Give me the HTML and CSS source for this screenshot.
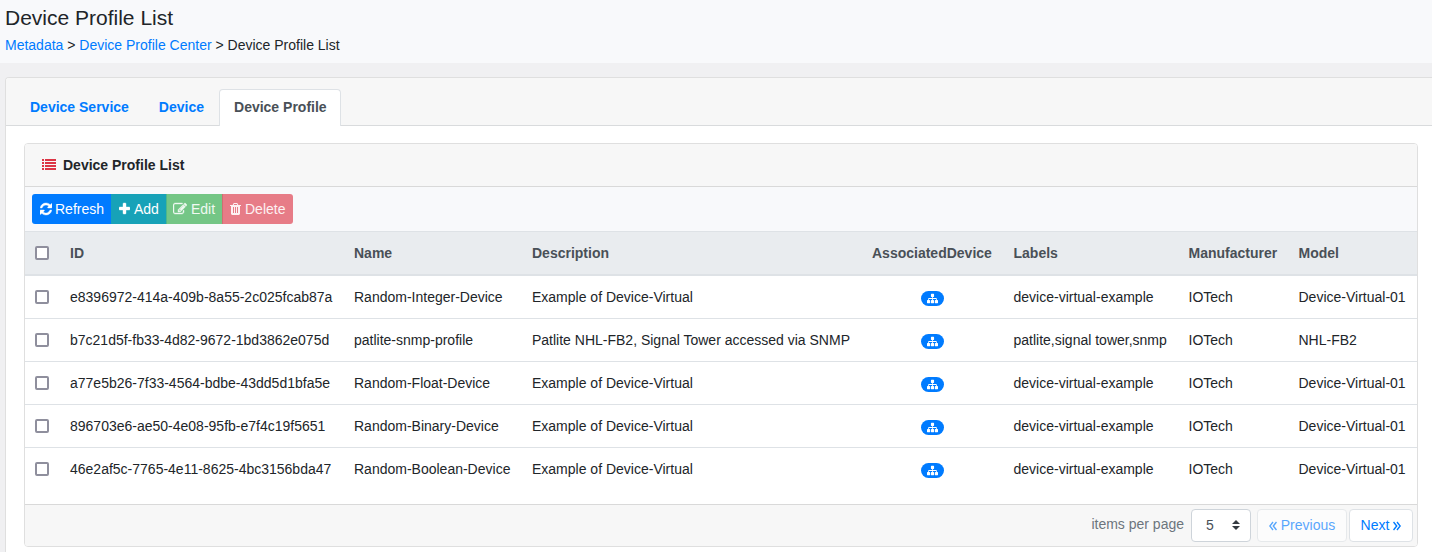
FILE: index.html
```html
<!DOCTYPE html>
<html lang="en">
<head>
<meta charset="utf-8">
<title>Device Profile List</title>
<link rel="stylesheet" href="styles.css">
</head>
<body>
<svg class="sprite" aria-hidden="true">
  <symbol id="list" viewBox="0 0 14 12"><path d="M0 0h2v2H0zM3 0h11v2H3zM0 3h2v2H0zM3 3h11v2H3zM0 6h2v2H0zM3 6h11v2H3zM0 9h2v2H0zM3 9h11v2H3z"/></symbol>
  <symbol id="refresh" viewBox="128 0 1536 1792"><path d="M1639 1056q0 5-1 7-64 268-268 434.500t-478 166.500q-146 0-282.500-55t-243.500-157l-129 129q-19 19-45 19t-45-19-19-45v-448q0-26 19-45t45-19h448q26 0 45 19t19 45-19 45l-137 137q71 66 161 102t187 36q134 0 250-65t186-179q11-17 53-117 8-23 30-23h192q13 0 22.500 9.500t9.500 22.500zm25-800v448q0 26-19 45t-45 19h-448q-26 0-45-19t-19-45 19-45l138-138q-148-137-349-137-134 0-250 65t-186 179q-11 17-53 117-8 23-30 23h-199q-13 0-22.500-9.500t-9.500-22.500v-7q65-268 270-434.500t480-166.500q146 0 284 55.500t245 156.500l130-129q19-19 45-19t45 19 19 45z"/></symbol>
  <symbol id="plus" viewBox="192 0 1408 1792"><path d="M1600 736v192q0 40-28 68t-68 28h-416v416q0 40-28 68t-68 28h-192q-40 0-68-28t-28-68v-416h-416q-40 0-68-28t-28-68v-192q0-40 28-68t68-28h416v-416q0-40 28-68t68-28h192q40 0 68 28t28 68v416h416q40 0 68 28t28 68z"/></symbol>
  <symbol id="edit" viewBox="0 0 1792 1792"><path d="M888 1184l116-116-152-152-116 116v56h96v96h56zm440-720q-16-16-33 1l-350 350q-17 17-1 33t33-1l350-350q17-17 1-33zm80 594v190q0 119-84.500 203.500t-203.500 84.500h-832q-119 0-203.500-84.500t-84.500-203.500v-832q0-119 84.500-203.500t203.500-84.500h832q63 0 117 25 15 7 18 23 3 17-9 29l-49 49q-14 14-32 8-23-6-45-6h-832q-66 0-113 47t-47 113v832q0 66 47 113t113 47h832q66 0 113-47t47-113v-126q0-13 9-22l64-64q15-15 35-7t20 29zm-96-738l288 288-672 672h-288v-288zm444 132l-92 92-288-288 92-92q28-28 68-28t68 28l152 152q28 28 28 68t-28 68z"/></symbol>
  <symbol id="trash" viewBox="192 0 1408 1792"><path d="M704 1376v-704q0-14-9-23t-23-9h-64q-14 0-23 9t-9 23v704q0 14 9 23t23 9h64q14 0 23-9t9-23zm256 0v-704q0-14-9-23t-23-9h-64q-14 0-23 9t-9 23v704q0 14 9 23t23 9h64q14 0 23-9t9-23zm256 0v-704q0-14-9-23t-23-9h-64q-14 0-23 9t-9 23v704q0 14 9 23t23 9h64q14 0 23-9t9-23zm-544-992h448l-48-117q-7-9-17-11h-317q-10 2-17 11zm928 32v64q0 14-9 23t-23 9h-96v948q0 83-47 143.500t-113 60.500h-832q-66 0-113-58.500t-47-141.500v-952h-96q-14 0-23-9t-9-23v-64q0-14 9-23t23-9h309l70-167q15-37 54-63t79-26h320q40 0 79 26t54 63l70 167h309q14 0 23 9t9 23z"/></symbol>
  <symbol id="sitemap" viewBox="0 0 1792 1792"><path d="M1792 1248v320q0 40-28 68t-68 28h-320q-40 0-68-28t-28-68v-320q0-40 28-68t68-28h96v-192h-512v192h96q40 0 68 28t28 68v320q0 40-28 68t-68 28h-320q-40 0-68-28t-28-68v-320q0-40 28-68t68-28h96v-192h-512v192h96q40 0 68 28t28 68v320q0 40-28 68t-68 28h-320q-40 0-68-28t-28-68v-320q0-40 28-68t68-28h96v-192q0-52 38-90t90-38h512v-192h-96q-40 0-68-28t-28-68v-320q0-40 28-68t68-28h320q40 0 68 28t28 68v320q0 40-28 68t-68 28h-96v192h512q52 0 90 38t38 90v192h96q40 0 68 28t28 68z"/></symbol>
  <symbol id="angles-left" viewBox="0 0 8 10"><path d="M4 1L.8 5 4 9M7.500 1L4.300 5l3.200 4" fill="none" stroke="currentColor" stroke-width="1.400"/></symbol>
  <symbol id="angles-right" viewBox="0 0 8 10"><path d="M.5 1L3.700 5 .5 9M4 1L7.200 5 4 9" fill="none" stroke="currentColor" stroke-width="1.400"/></symbol>
</svg>

<header class="page-head">
  <h1 class="page-title">Device Profile List</h1>
  <nav class="crumbs"><a href="#">Metadata</a> &gt; <a href="#">Device Profile Center</a> &gt; Device Profile List</nav>
</header>

<main class="panel">
  <nav class="tabs">
    <a class="tab" href="#">Device Service</a>
    <a class="tab" href="#">Device</a>
    <a class="tab active" href="#">Device Profile</a>
  </nav>
  <div class="panel-body">
    <section class="card">
      <div class="card-head"><svg class="icon-list"><use href="#list"/></svg>Device Profile List</div>
      <div class="toolbar">
        <button class="btn refresh"><svg class="ico w12"><use href="#refresh"/></svg>Refresh</button>
        <button class="btn add"><svg class="ico w11"><use href="#plus"/></svg>Add</button>
        <button class="btn edit"><svg class="ico w14"><use href="#edit"/></svg>Edit</button>
        <button class="btn delete"><svg class="ico w11"><use href="#trash"/></svg>Delete</button>
      </div>
      <table class="grid">
        <colgroup><col class="c-check"><col class="c-id"><col class="c-name"><col class="c-desc"><col class="c-assoc"><col class="c-labels"><col class="c-manu"><col></colgroup>
        <thead>
          <tr><th><span class="check"></span></th><th>ID</th><th>Name</th><th>Description</th><th>AssociatedDevice</th><th>Labels</th><th>Manufacturer</th><th>Model</th></tr>
        </thead>
        <tbody>
          <tr><td><span class="check"></span></td><td>e8396972-414a-409b-8a55-2c025fcab87a</td><td>Random-Integer-Device</td><td>Example of Device-Virtual</td><td class="assoc"><span class="badge"><svg><use href="#sitemap"/></svg></span></td><td>device-virtual-example</td><td>IOTech</td><td>Device-Virtual-01</td></tr>
          <tr><td><span class="check"></span></td><td>b7c21d5f-fb33-4d82-9672-1bd3862e075d</td><td>patlite-snmp-profile</td><td>Patlite NHL-FB2, Signal Tower accessed via SNMP</td><td class="assoc"><span class="badge"><svg><use href="#sitemap"/></svg></span></td><td>patlite,signal tower,snmp</td><td>IOTech</td><td>NHL-FB2</td></tr>
          <tr><td><span class="check"></span></td><td>a77e5b26-7f33-4564-bdbe-43dd5d1bfa5e</td><td>Random-Float-Device</td><td>Example of Device-Virtual</td><td class="assoc"><span class="badge"><svg><use href="#sitemap"/></svg></span></td><td>device-virtual-example</td><td>IOTech</td><td>Device-Virtual-01</td></tr>
          <tr><td><span class="check"></span></td><td>896703e6-ae50-4e08-95fb-e7f4c19f5651</td><td>Random-Binary-Device</td><td>Example of Device-Virtual</td><td class="assoc"><span class="badge"><svg><use href="#sitemap"/></svg></span></td><td>device-virtual-example</td><td>IOTech</td><td>Device-Virtual-01</td></tr>
          <tr><td><span class="check"></span></td><td>46e2af5c-7765-4e11-8625-4bc3156bda47</td><td>Random-Boolean-Device</td><td>Example of Device-Virtual</td><td class="assoc"><span class="badge"><svg><use href="#sitemap"/></svg></span></td><td>device-virtual-example</td><td>IOTech</td><td>Device-Virtual-01</td></tr>
        </tbody>
      </table>
      <div class="card-foot">
        <span class="per-page">items per page</span>
        <span class="select">5<svg class="caret" viewBox="0 0 8 10"><path d="M0 4l4-4 4 4zM0 6l4 4 4-4z"/></svg></span>
        <span class="page-btn prev"><svg class="angles"><use href="#angles-left"/></svg>Previous</span>
        <span class="page-btn next">Next<svg class="angles"><use href="#angles-right"/></svg></span>
      </div>
    </section>
  </div>
</main>
</body>
</html>
```

FILE: styles.css
```css
* { box-sizing: border-box; }
html, body { height: 100%; }
body {
  display: flex;
  flex-direction: column;
  margin: 0;
  background: #f0f0f2;
  color: #212529;
  font: 14px/21px "Liberation Sans", Arial, sans-serif;
}
a { color: #007bff; text-decoration: none; }
svg { fill: currentColor; flex: none; }
.sprite { position: absolute; width: 0; height: 0; }

.page-head { height: 63px; padding: 5px 5px 0; background: #f8f9fb; }
.page-title { margin: 0 0 5px; font-size: 21px; line-height: 25px; font-weight: 400; }

.panel {
  flex: 1;
  margin: 14px 0 0 5px;
  background: #fff;
  border: 1px solid #dfdfdf;
  border-width: 1px 0 0 1px;
  border-radius: 4px 0 0 0;
}
.tabs {
  display: flex;
  height: 48px;
  padding: 11px 9px 0;
  background: #f7f7f7;
  border-bottom: 1px solid #d9dbdd;
  border-radius: 3px 0 0 0;
}
.tab {
  height: 37px;
  padding: 7px 14px;
  border: 1px solid transparent;
  border-bottom: 0;
  border-radius: 4px 4px 0 0;
  font-weight: 700;
}
.tab.active { width: 122px; padding-right: 0; background: #fff; border-color: #dee2e6; color: #495057; }

.panel-body { padding: 17px 14px 0 18px; }
.card { width: 1394px; border: 1px solid #dfdfdf; border-radius: 4px; overflow: hidden; }
.card-head {
  display: flex;
  align-items: center;
  gap: 7px;
  height: 43px;
  padding-left: 17px;
  background: #f7f7f7;
  border-bottom: 1px solid #d9d9d9;
  font-weight: 700;
}
.icon-list { width: 14px; height: 12px; color: #dc3545; }

.toolbar { display: flex; height: 44px; padding: 7px; background: #f8f9fb; }
.btn {
  display: flex;
  align-items: center;
  gap: 4px;
  height: 30px;
  padding: 0 7px;
  border: 0;
  color: #fff;
  font: inherit;
}
.ico { height: 14px; stroke: currentColor; stroke-width: 50px; overflow: visible; }
.w11 { width: 11px; }
.w12 { width: 12px; }
.w14 { width: 14px; }
.refresh { width: 79px; padding-left: 7.500px; gap: 3.500px; background: #007bff; border-radius: 3px 0 0 3px; }
.add { width: 55px; padding-left: 8px; background: #17a2b8; }
.edit { width: 56px; background: #74c686; color: #f0f9f2; border-left: 1px solid #4eb78a; padding-left: 6px; }
.delete { width: 71px; background: #e77c87; color: #fdf1f2; border-left: 1px solid #cf6e72; border-radius: 0 3px 3px 0; }
.delete .ico { stroke-width: 0; }

.grid { width: 100%; margin-bottom: 14px; table-layout: fixed; border-spacing: 0; }
.c-check { width: 34.500px; }
.c-id { width: 284px; }
.c-name { width: 178px; }
.c-desc { width: 340px; }
.c-assoc { width: 141.500px; }
.c-labels { width: 175px; }
.c-manu { width: 110px; }
.grid th, .grid td { padding: 0 0 0 10.500px; text-align: left; white-space: nowrap; }
.grid tr > :first-child { padding-left: 10px; }
.grid th { height: 45px; background: #e9ecef; color: #495057; border-top: 1px solid #dee2e6; border-bottom: 2px solid #dee2e6; }
.grid td { height: 43px; border-top: 1px solid #dee2e6; }
.grid tbody tr:first-child td { height: 42px; border-top: 0; }
.grid .assoc { padding-right: 10.500px; text-align: center; }
.check { display: block; width: 14px; height: 14px; background: #fff; border: 2px solid #8f8f9d; border-radius: 2px; }
.badge {
  display: inline-flex;
  align-items: center;
  justify-content: center;
  width: 23px;
  height: 15px;
  margin-top: 2px;
  border-radius: 8px;
  background: #007bff;
  color: #fff;
  vertical-align: middle;
}
.badge svg { width: 11px; height: 11px; }

.card-foot {
  display: flex;
  justify-content: flex-end;
  height: 42px;
  padding: 4px 4px 0 0;
  background: #f7f7f7;
  border-top: 1px solid #d9d9d9;
}
.per-page { padding-top: 5px; margin-right: 7px; color: #6c757d; }
.select, .page-btn { display: flex; align-items: center; height: 33px; border-radius: 4px; background: #fff; }
.select { width: 60px; padding: 0 10px 0 14px; justify-content: space-between; border: 1px solid #ced4da; color: #495057; }
.caret { width: 8px; height: 10px; margin-top: -1px; color: #343a40; }
.page-btn { justify-content: center; gap: 4px; border: 1px solid #dee2e6; color: #007bff; }
.prev { width: 90px; margin: 0 2px 0 6px; opacity: .65; }
.next { width: 64px; }
.angles { width: 8px; height: 10px; }
```
